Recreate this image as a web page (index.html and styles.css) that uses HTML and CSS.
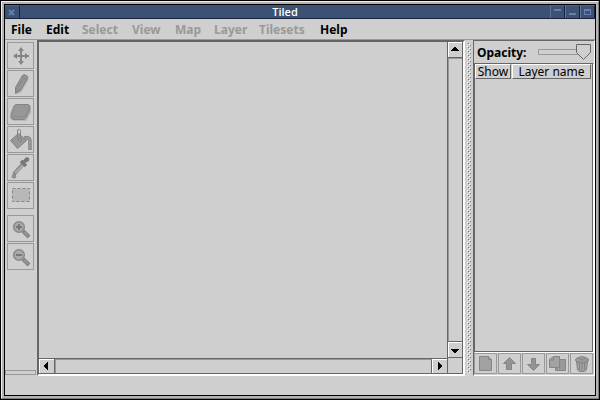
FILE: index.html
```
<!DOCTYPE html>
<html lang="en">
<head>
<meta charset="utf-8">
<title>Tiled</title>
<link rel="stylesheet" href="styles.css">
</head>
<body>
<div class="frame"><div class="bevel"><div class="window">
  <header class="titlebar">
    <span class="wbtn close"><svg width="14" height="13" viewBox="0 0 14 13"><path d="M4 5l5 5M9 5l-5 5" stroke="#627fae" stroke-width="2"/></svg></span>
    <span class="title">Tiled</span>
    <span class="wbtn"><svg width="14" height="13"><path d="M3 4h7v2H3z" fill="#627fae"/></svg></span>
    <span class="wbtn"><svg width="14" height="13"><path d="M3 8h7v2H3z" fill="#627fae"/></svg></span>
    <span class="wbtn last"><svg width="14" height="13"><path d="M3 4h7v6H3zM4 6v3h5V6z" fill="#627fae" fill-rule="evenodd"/></svg></span>
  </header>
  <nav class="menubar">
    <span class="m-file">File</span><span class="m-edit">Edit</span><span class="m-select off">Select</span><span class="m-view off">View</span><span class="m-map off">Map</span><span class="m-layer off">Layer</span><span class="m-sets off">Tilesets</span><span class="m-help">Help</span>
  </nav>
  <main class="main">
    <aside class="toolbar">
      <div class="tool"><svg width="25" height="25" viewBox="0 0 25 25"><path d="M13 6v15M6 13h15" stroke="#868686" stroke-width="2"/><path d="M13 4l3 4h-6zM13 22l3-4h-6zM5 13l4-3v6zM21 13l-4-3v6z" fill="#868686"/></svg></div>
      <div class="tool"><svg width="25" height="25" viewBox="0 0 25 25"><path d="M9 22l4-2 7-12-1-3" fill="none" stroke="#b8b8b8" stroke-width="2"/><path d="M7.500 22.500v-6l7-12 2-1 3 2v2l-7 12z" fill="#969696" stroke="#808080"/><path d="M8 17l4 2M14 6l4 2.500M10 16l5-8" stroke="#858585"/><path d="M8 19l2 1-2 2z" fill="#858585"/></svg></div>
      <div class="tool"><svg width="25" height="25" viewBox="0 0 25 25"><path d="M5 21h13l5-9" fill="none" stroke="#b9b9b9" stroke-width="2"/><path d="M7.500 5.500h13l1.500 1.500v4l-4 8-1.500 1.500h-12L3 19v-4l3-8z" fill="#959895" stroke="#858585"/><path d="M3.500 16l1 1.500H17l4.500-9" fill="none" stroke="#8b8d8b"/></svg></div>
      <div class="tool"><svg width="25" height="25" viewBox="0 0 25 25"><path d="M16 11l3-.5q3 .5 3 4V23" fill="none" stroke="#858585" stroke-width="3.500"/><path d="M16 11l3-.5q3 .5 3 4V22" fill="none" stroke="#9c9c9c" stroke-width="1.500"/><path d="M10.500 6.500l8 7-9 8-7-8z" fill="#969896" stroke="#848484"/><path d="M9.500 12V4q0-2 2-1.500 1.500 0 1 2v8" fill="none" stroke="#848484"/><circle cx="12" cy="13" r="1.500" fill="#acacac" stroke="#7d7d7d"/></svg></div>
      <div class="tool"><svg width="25" height="25" viewBox="0 0 25 25"><path d="M6 19L16 8" stroke="#858585" stroke-width="4"/><path d="M7 18l9-9" stroke="#adadad" stroke-width="1.800"/><path d="M13 6l5 5M15 8l4-4" stroke="#777" stroke-width="3.500"/><circle cx="19" cy="4.500" r="2.300" fill="#777"/><path d="M5.500 18.500l-1.500 3 1 1.500h2l1-2z" fill="#989898" stroke="#858585"/></svg></div>
      <div class="tool"><svg width="25" height="25" viewBox="0 0 25 25"><path d="M4.500 5.500h17v13h-17z" fill="#b9b7b9"/><path d="M4.500 5.500h17v13h-17z" fill="none" stroke="#858585" stroke-dasharray="3 2"/></svg></div>
      <div class="tool zoom-in"><svg width="25" height="25" viewBox="0 0 25 25"><path d="M15 15l6 6" stroke="#858585" stroke-width="4"/><path d="M16 16l4 4" stroke="#999" stroke-width="1.500"/><circle cx="11" cy="11" r="5.300" fill="#aaa" stroke="#888" stroke-width="1.500"/><path d="M8 11h6M11 8v6" stroke="#777" stroke-width="2"/></svg></div>
      <div class="tool"><svg width="25" height="25" viewBox="0 0 25 25"><path d="M15 15l6 6" stroke="#858585" stroke-width="4"/><path d="M16 16l4 4" stroke="#999" stroke-width="1.500"/><circle cx="11" cy="11" r="5.300" fill="#aaa" stroke="#888" stroke-width="1.500"/><path d="M8 11h6" stroke="#777" stroke-width="2"/></svg></div>
      <div class="coords"></div>
    </aside>
    <section class="scrollpane">
      <div class="view"></div>
      <div class="vbar">
        <div class="sbtn"><svg width="14" height="14" shape-rendering="crispEdges"><path d="M6 5h2v1h1v1h1v1h1v1H3V8h1V7h1V6h1z"/></svg></div>
        <div class="track"></div>
        <div class="sbtn"><svg width="14" height="14" shape-rendering="crispEdges"><path d="M3 7h8v1h-1v1H9v1H8v1H6v-1H5V9H4V8H3z"/></svg></div>
      </div>
      <div class="hbar">
        <div class="sbtn"><svg width="14" height="14" shape-rendering="crispEdges"><path d="M5 6h1V5h1V4h1V3h1v8H8v-1H7V9H6V8H5z"/></svg></div>
        <div class="track"></div>
        <div class="sbtn end"><svg width="14" height="14" shape-rendering="crispEdges"><path d="M6 3h1v1h1v1h1v1h1v2H9v1H8v1H7v1H6z"/></svg></div>
      </div>
      <div class="corner"></div>
    </section>
    <div class="splitter"><svg width="8" height="336" shape-rendering="crispEdges"><defs><pattern id="bumps" width="4" height="4" patternUnits="userSpaceOnUse"><path d="M0 0h1v1H0zM2 2h1v1H2z" fill="#fff"/><path d="M1 1h1v1H1zM3 3h1v1H3z" fill="#777"/></pattern></defs><path d="M2 3h4v330H2z" fill="url(#bumps)"/></svg></div>
    <section class="layers">
      <div class="opacity"><span class="label">Opacity:</span><svg class="slider" width="56" height="22" viewBox="0 0 56 22"><path d="M1.500 8.500h40v5h-40z" fill="#cfcfcf" stroke="#999"/><path d="M39.500 3.500h14v8L46.500 18.500l-7-7z" fill="#cfcfcf" stroke="#666"/></svg></div>
      <div class="table">
        <div class="thead"><span class="th show">Show</span><span class="th name">Layer name</span></div>
      </div>
      <div class="actions">
        <div class="act"><svg width="21" height="19" viewBox="0 0 21 19"><path d="M4.500 2.500h9l3 3v11h-12z" fill="#a2a2a2" stroke="#858585"/><path d="M13.500 2.500v3h3" fill="#aaa" stroke="#858585"/></svg></div>
        <div class="act"><svg width="21" height="19" viewBox="0 0 21 19"><path d="M10.500 3.500l6 6h-4v6h-5v-6h-3z" fill="#929692" stroke="#858585"/></svg></div>
        <div class="act"><svg width="21" height="19" viewBox="0 0 21 19"><path d="M8.500 4.500h4v6h4l-6 6-6-6h4z" fill="#929692" stroke="#858585"/></svg></div>
        <div class="act"><svg width="21" height="19" viewBox="0 0 21 19"><path d="M9.500 5.500h9v11h-10v-9z" fill="#999" stroke="#858585"/><path d="M6.500 2.500h6v11h-10v-8z" fill="#a2a2a2" stroke="#858585"/><path d="M6.500 3v3h-4" fill="none" stroke="#858585"/></svg></div>
        <div class="act"><svg width="21" height="19" viewBox="0 0 21 19"><path d="M5.500 7l1 9 2 1.500h5l2-1.500 1-9z" fill="#a2a2a2" stroke="#858585"/><path d="M8.500 9v7M11 9v8M13.500 9v7" stroke="#858585"/><ellipse cx="11" cy="6" rx="6.500" ry="3" fill="#999" stroke="#828282"/><path d="M8.500 5V3.500q2.500-2 5 0V5z" fill="#a5a5a5" stroke="#858585"/></svg></div>
      </div>
    </section>
  </main>
  <footer class="status"></footer>
</div></div></div>
</body>
</html>
```

FILE: styles.css
```
* { box-sizing: border-box; }
body { margin: 0; background: #cfcfcf; color: #000; font: 12px "Noto Sans", sans-serif; overflow: hidden; }
svg { display: block; }
.frame { width: 600px; height: 400px; border: 1px solid #000; }
.bevel { height: 398px; border: 1px solid; border-color: #f2eef2 #7b7d7b #7b7d7b #f2eef2; background: #b5b1b5; padding: 2px; }
.window { width: 592px; height: 392px; border: 1px solid #000; background: #cfcfcf; display: flex; flex-direction: column; }
.titlebar { height: 14px; flex: none; display: flex; background: #3b5275; border-bottom: 1px solid #18233c; color: #fff; }
.title { flex: 1; text-align: center; font: 600 11px/13px "Open Sans", sans-serif; }
.wbtn { width: 15px; height: 13px; border-left: 1px solid #627395; border-top: 1px solid #4c648a; border-right: 1px solid #18233c; overflow: hidden; }
.wbtn svg { margin-top: -1px; }
.close { border-left: 0; }
.menubar { height: 21px; flex: none; display: flex; border-bottom: 1px solid #999; padding-left: 6px; font: 700 12px/21px "Noto Sans", sans-serif; white-space: nowrap; }
.off { color: #999; }
.m-file { width: 35px; }
.m-edit { width: 36px; }
.m-select { width: 50px; }
.m-view { width: 43px; }
.m-map { width: 39px; }
.m-layer { width: 45px; }
.m-sets { width: 61px; }
.main { height: 336px; flex: none; display: flex; }
.toolbar { width: 32px; padding: 2px 0 1px 2px; display: flex; flex-direction: column; gap: 1px; }
.tool { width: 27px; height: 27px; flex: none; border: 1px solid #999; overflow: hidden; }
.zoom-in { margin-top: 5px; }
.coords { margin: auto 0 0 -2px; width: 31px; height: 5px; border: 1px solid #999; }
.scrollpane { width: 428px; height: 336px; border: 2px solid; border-color: #666 #fff #fff #666; display: grid; grid-template: 316px 16px / 408px 16px; }
.vbar { border: 1px solid #666; border-width: 0 1px 0 1px; display: flex; flex-direction: column; }
.hbar { border: 1px solid #666; border-width: 1px 0; display: flex; }
.vbar .sbtn { height: 16px; border-bottom: 1px solid #666; }
.hbar .sbtn { width: 16px; border-right: 1px solid #666; }
.hbar .end { width: 15px; border-right: 0; }
.sbtn { flex: none; box-shadow: inset 1px 1px #fff; overflow: hidden; }
.track { flex: 1; }
.vbar .track { border-left: 1px solid #999; border-top: 1px solid #999; border-bottom: 1px solid #666; }
.hbar .track { border-top: 1px solid #999; border-left: 1px solid #999; border-right: 1px solid #666; }
.corner { border: 1px solid #666; border-width: 0 1px 1px 1px; }
.splitter { width: 8px; }
.layers { width: 122px; height: 336px; border: 1px solid; border-color: #666 #fff #fff #666; display: flex; flex-direction: column; }
.opacity { height: 22px; display: flex; }
.label { width: 63px; padding-left: 3px; font: 700 12px/23px "Noto Sans", sans-serif; }
.slider { flex: none; }
.table { height: 290px; width: 120px; border: 1px solid; border-color: #666 #fff #fff #666; box-shadow: inset -1px -1px #666; }
.thead { display: flex; gap: 1px; height: 15px; }
.th { height: 15px; border: 1px solid; border-color: #fff #666 #666 #fff; text-align: center; font: 12px/14px "Noto Sans", sans-serif; white-space: nowrap; }
.show { width: 36px; }
.name { width: 79px; }
.actions { display: flex; gap: 1px; height: 22px; }
.act { width: 23px; height: 21px; border: 1px solid #999; }
.status { flex: 1; }
```
